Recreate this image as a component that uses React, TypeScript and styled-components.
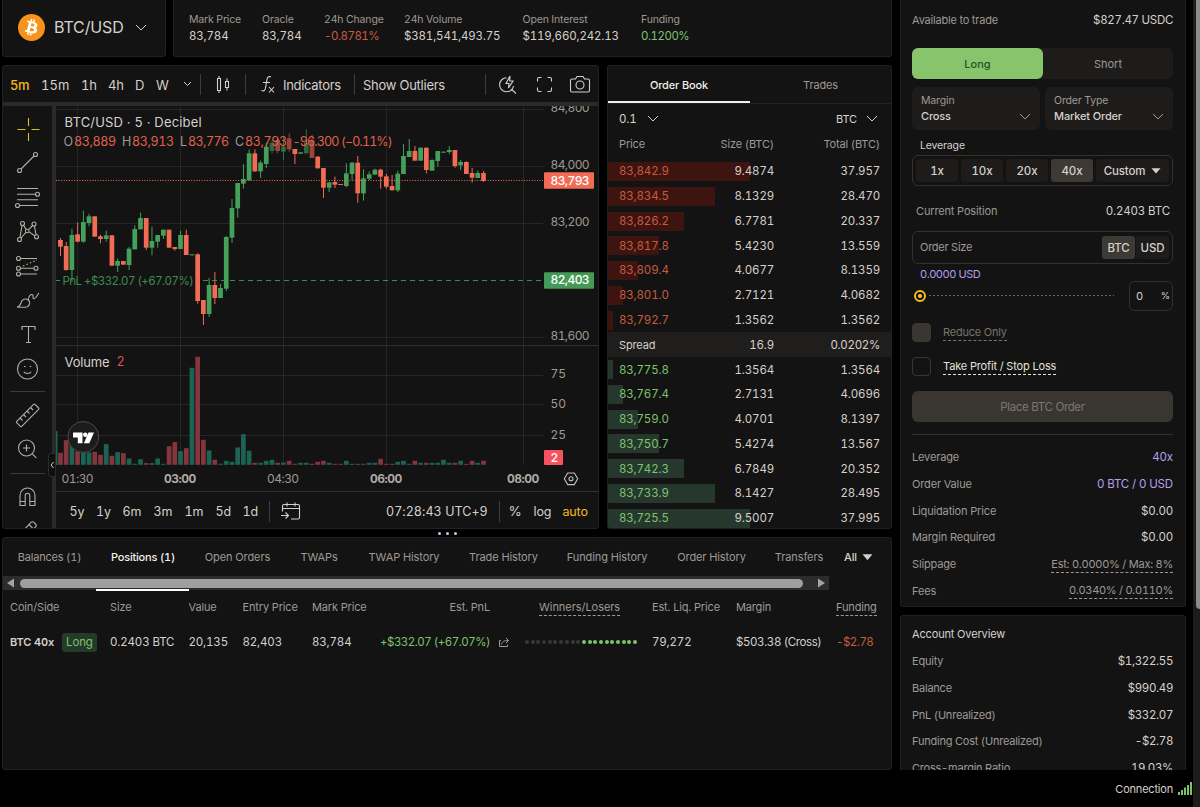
import React from "react";
import styled, { createGlobalStyle } from "styled-components";

const c = {
  panel: "#131313",
  edge: "#212121",
  strip: "#2a2a2a",
  text: "#d6d0cb",
  label: "#9f9994",
  bright: "#f2eeea",
  red: "#ca5a3f",
  green: "#7cc46a",
  purple: "#b79df0",
  gold: "#f6b81c",
  candleUp: "#45a05a",
  candleDown: "#f26b54",
};

const Global = createGlobalStyle`
  html, body { margin: 0; background: #000; }
  body {
    overflow: hidden;
    font-family: Inter, "Liberation Sans", sans-serif;
    font-size: 11px;
    font-variant-numeric: tabular-nums;
    letter-spacing: -0.15px;
    color: ${c.text};
  }
  *, *::before, *::after { box-sizing: border-box; }
  svg { display: block; flex: none; }
`;

const Page = styled.div`
  width: 1200px;
  height: 807px;
  display: grid;
  grid-template-columns: 1193px 7px;
  white-space: nowrap;
  overflow: hidden;
`;
const Content = styled.div`
  display: grid;
  grid-template-rows: 770px 37px;
`;
const Main = styled.div`
  display: grid;
  grid-template-columns: 890px 286px;
  column-gap: 8px;
  padding-left: 2px;
  height: 770px;
  overflow: hidden;
`;
const LeftColumn = styled.div`
  display: grid;
  grid-template-rows: 57px 464px 233px;
  row-gap: 8px;
  height: 770px;
`;
const Panel = styled.section`
  background: ${c.panel};
  border: 1px solid ${c.edge};
  border-radius: 3px;
  overflow: hidden;
  min-width: 0;
`;
const Columns = styled.div<{ $cols: string; $h?: number; $pad?: string; $size?: number }>`
  display: grid;
  grid-template-columns: ${(p) => p.$cols};
  align-items: center;
  height: ${(p) => (p.$h ? `${p.$h}px` : "auto")};
  padding: ${(p) => p.$pad ?? "0"};
  font-size: ${(p) => p.$size ?? 11}px;
`;
const Text = styled.span<{ $tone?: string; $size?: number; $weight?: number; $ls?: number; $end?: boolean; $mid?: boolean }>`
  color: ${(p) => p.$tone ?? c.text};
  font-size: ${(p) => (p.$size ? `${p.$size}px` : "inherit")};
  font-weight: ${(p) => p.$weight ?? 400};
  letter-spacing: ${(p) => (p.$ls === undefined ? "inherit" : `${p.$ls}px`)};
  text-align: ${(p) => (p.$end ? "right" : p.$mid ? "center" : "left")};
`;
const Dashed = styled(Text)<{ $under?: string }>`
  justify-self: start;
  line-height: 15px;
  padding-top: 1px;
  border-bottom: 1px dashed ${(p) => p.$under ?? p.$tone ?? c.text};
`;

/* ---------- header ---------- */
const HeaderRow = styled.div`
  display: grid;
  grid-template-columns: 164px 719px;
  column-gap: 7px;
`;
const TopPanel = styled(Panel)`
  border-top: 0;
  border-radius: 0 0 3px 3px;
`;
const Symbol = styled.div`
  display: flex;
  align-items: center;
  height: 54px;
  padding-left: 15px;
  gap: 9px;
`;
const PairChevron = styled.span`
  padding: 1px 0 0 2px;
`;
const Stat = styled.div`
  display: flex;
  flex-direction: column;
  gap: 2px;
  line-height: 14px;
`;

const stats: [string, string, string?][] = [
  ["Mark Price", "83,784"],
  ["Oracle", "83,784"],
  ["24h Change", "-0.8781%", c.red],
  ["24h Volume", "$381,541,493.75"],
  ["Open Interest", "$119,660,242.13"],
  ["Funding", "0.1200%", c.green],
];

const Chevron = ({ w = 12, color = c.text }: { w?: number; color?: string }) => (
  <svg width={w} height={w / 2 + 2} viewBox={`0 0 ${w} ${w / 2 + 2}`} fill="none" stroke={color}>
    <path d={`M1 1L${w / 2} ${w / 2}L${w - 1} 1`} />
  </svg>
);
const Caret = ({ w = 10 }: { w?: number }) => (
  <svg width={w} height={w * 0.6} viewBox="0 0 10 6" fill={c.text}>
    <path d="M0.5 0.3h9L5 5.6z" />
  </svg>
);

const Bitcoin = () => (
  <svg width="27" height="27" viewBox="0 0 64 64">
    <circle cx="32" cy="32" r="32" fill="#f7931a" />
    <path
      fill="#fff"
      d="M46.1 27.4c.6-4.3-2.6-6.5-7-8.1l1.4-5.7-3.5-.9-1.4 5.6-2.8-.7 1.4-5.6-3.4-.8-1.5 5.7-2.2-.5-4.8-1.2-.9 3.700s2.600.6 2.500.6c1.400.4 1.700 1.300 1.600 2l-3.900 15.800c-.2.4-.6 1.100-1.600.8l-2.500-.6-1.800 4 4.500 1.100 2.500.7-1.400 5.700 3.400.9 1.500-5.700 2.700.7-1.400 5.700 3.500.8 1.400-5.700c5.900 1.100 10.400.7 12.200-4.700 1.500-4.300-.1-6.800-3.200-8.400 2.300-.5 4-2 4.500-5.200zm-8 11.200c-1.100 4.300-8.300 2-10.600 1.400l1.900-7.600c2.300.6 9.800 1.700 8.700 6.200zm1.100-11.300c-1 3.900-7 1.900-8.900 1.400l1.700-6.900c1.900.5 8.200 1.400 7.200 5.500z"
    />
  </svg>
);

/* ---------- chart ---------- */
const MidRow = styled.div`
  display: grid;
  grid-template-columns: 597px 285px;
  column-gap: 8px;
`;
const ChartPanel = styled(Panel)`
  display: grid;
  grid-template-rows: 36px 426px;
`;
const ChartBody = styled.div`
  display: grid;
  grid-template-columns: 49px 546px;
  border-top: 4px solid ${c.strip};
`;
const Tools = styled.div`
  display: flex;
  flex-direction: column;
  align-items: center;
  height: 422px;
  overflow: hidden;
  padding-top: 9px;
  color: #b5afaa;
`;
const Tool = styled.div<{ $h: number }>`
  height: ${(p) => p.$h}px;
  flex: none;
  display: flex;
  align-items: center;
`;
const ToolRule = styled.div<{ $after: number }>`
  width: 35px;
  height: 1px;
  flex: none;
  background: #3a3a3a;
  margin-bottom: ${(p) => p.$after}px;
`;
const Canvas = styled.div`
  position: relative;
  border-left: 4px solid ${c.strip};
  display: grid;
  grid-template-rows: 386px 36px;
`;
const Rule = styled.div`
  width: 1px;
  height: 21px;
  background: #3d3d3d;
`;
const Collapse = styled.div`
  position: absolute;
  left: -8px;
  top: 347px;
  width: 8px;
  height: 24px;
  border-radius: 3px 0 0 3px;
  background: #0f0f0f;
  border: 1px solid #2c2c2c;
  display: flex;
  align-items: center;
  justify-content: center;
`;
const Handle = styled.div`
  position: absolute;
  left: 438px;
  top: 532px;
  display: flex;
  gap: 5px;
  i { width: 3px; height: 3px; border-radius: 2px; background: #c9c3ef; }
`;

// [direction, body top, body bottom, wick top, wick bottom, volume height], in thirds of a pixel
type Candle = [number, number, number, number, number, number];
const candles: Candle[] = [
  [0, 420, 440, 414, 468, 36], [0, 438, 510, 426, 512, 74], [1, 405, 510, 386, 545, 64], [0, 403, 425, 367, 427, 40],
  [1, 366, 425, 332, 428, 56], [1, 349, 369, 341, 379, 37], [0, 349, 410, 349, 410, 39], [0, 409, 417, 404, 430, 30],
  [1, 406, 417, 392, 425, 62], [0, 406, 497, 406, 497, 27], [1, 483, 497, 475, 516, 38], [0, 483, 494, 483, 494, 35],
  [1, 446, 495, 441, 510, 19], [1, 387, 448, 376, 448, 3], [1, 354, 388, 338, 388, 17], [0, 354, 443, 354, 450, 5],
  [1, 423, 443, 380, 466, 5], [1, 405, 425, 405, 443, 19], [1, 389, 407, 389, 417, 3], [0, 389, 443, 389, 443, 56],
  [0, 441, 447, 441, 452, 68], [1, 405, 447, 392, 447, 41], [0, 405, 465, 389, 465, 50], [1, 463, 466, 463, 466, 291],
  [0, 463, 603, 460, 611, 324], [0, 600, 642, 600, 675, 75], [1, 555, 642, 534, 651, 43], [0, 555, 594, 516, 612, 15],
  [1, 564, 594, 552, 594, 3], [1, 411, 566, 408, 573, 12], [1, 324, 413, 297, 429, 9], [1, 249, 325, 249, 353, 52],
  [1, 237, 251, 192, 266, 92], [1, 160, 241, 148, 241, 42], [0, 160, 214, 148, 216, 6], [1, 188, 214, 182, 234, 6],
  [1, 140, 192, 128, 204, 12], [1, 128, 153, 120, 160, 15], [0, 120, 153, 112, 160, 6], [1, 140, 155, 112, 180, 7],
  [0, 115, 148, 100, 155, 12], [0, 147, 162, 147, 192, 3], [1, 157, 161, 157, 161, 6], [1, 128, 160, 88, 160, 6],
  [0, 120, 174, 105, 174, 3], [0, 170, 205, 168, 205, 9], [0, 204, 263, 204, 294, 12], [1, 247, 263, 247, 276, 6],
  [0, 246, 254, 230, 264, 3], [0, 252, 255, 252, 255, 3], [1, 220, 258, 190, 262, 12], [1, 188, 222, 186, 240, 3],
  [0, 188, 280, 168, 308, 3], [1, 235, 280, 208, 302, 3], [1, 223, 236, 214, 240, 6], [1, 209, 224, 206, 224, 6],
  [0, 209, 230, 206, 266, 18], [0, 229, 260, 222, 266, 3], [0, 258, 271, 225, 271, 3], [1, 221, 271, 212, 276, 9],
  [1, 168, 222, 132, 222, 12], [1, 153, 171, 117, 171, 3], [0, 153, 182, 138, 182, 12], [1, 143, 182, 143, 182, 6],
  [0, 143, 210, 143, 220, 6], [1, 180, 212, 178, 212, 6], [1, 153, 183, 153, 200, 6], [1, 155, 158, 155, 158, 15],
  [1, 150, 156, 138, 162, 6], [0, 150, 198, 150, 203, 6], [1, 186, 196, 180, 210, 12], [0, 186, 222, 184, 222, 3],
  [0, 219, 233, 204, 248, 12], [1, 219, 234, 212, 234, 6], [0, 219, 243, 213, 246, 12],
];
const vLines = [77.5, 180.5, 283.5, 386.5, 523.5];
const priceLines = [109.5, 166.5, 223.5, 337.5];
const volLines = [375.5, 404.5, 435.5];

const Plot = () => (
  <svg width="542" height="386" viewBox="56 106 542 386" fontFamily="Inter, sans-serif" fontSize="12">
    <g stroke="#262626">
      {vLines.map((x) => <path key={x} d={`M${x} 106V465`} />)}
      {priceLines.map((y) => <path key={y} d={`M56 ${y}H543`} />)}
      {volLines.map((y) => <path key={y} d={`M56 ${y}H543`} />)}
      <path d="M56 345.5H598M56 491.5H598" stroke="#303030" />
    </g>
    <rect x="56" y="431" width="1.5" height="34" fill="#1d6455" />
    {candles.map(([up, , , , , vol], i) => (
      <rect key={i} x={58.1 + i * 5.717} y={464.8 - vol / 3} width="4.7" height={vol / 3} fill={up ? "#1d6354" : "#84353d"} />
    ))}
    {candles.map(([up, top, bottom, high, low], i) => {
      const fill = up ? c.candleUp : c.candleDown;
      const x = 58.1 + i * 5.717;
      return (
        <g key={i} fill={fill} opacity={i > 36 && i < 45 && top < 147 ? 0.6 : 1}>
          <rect x={x + 1.9} y={100 + high / 3} width="1" height={(low - high) / 3} />
          <rect x={x} y={100 + top / 3} width="4.7" height={(bottom - top) / 3} />
        </g>
      );
    })}
    <path d="M56 180.5H543" stroke={c.candleDown} strokeDasharray="1 1.6" />
    <path d="M56 280.5H60M203 280.5H543" stroke={c.candleUp} strokeOpacity="0.85" strokeDasharray="5 4" />
    <text x="62.5" y="284.7" fontSize="11.5" fill="#3d8a4e" textLength="131">PnL +$332.07 (+67.07%)</text>

    <text x="64.5" y="126.8" fontSize="13" fill={c.text} textLength="137">BTC/USD · 5 · Decibel</text>
    <g fill="#e0604b" fontSize="12.5">
      <text x="63.5" y="145.8" fill={c.label}>O</text><text x="74" y="145.8" textLength="42">83,889</text>
      <text x="122" y="145.8" fill={c.label}>H</text><text x="132" y="145.8" textLength="42">83,913</text>
      <text x="180" y="145.8" fill={c.label}>L</text><text x="188" y="145.8" textLength="41">83,776</text>
      <text x="235" y="145.8" fill={c.label}>C</text><text x="245" y="145.8" textLength="42">83,793</text>
      <text x="292.5" y="145.8" textLength="100">-96.300 (−0.11%)</text>
    </g>
    <text x="64.5" y="366.8" fontSize="13" fill={c.text} textLength="45">Volume</text>
    <text x="116.500" y="366.3" fontSize="12.5" fill="#e34c5c">2</text>

    <g fill={c.label} fontSize="12">
      <text x="550.5" y="112" textLength="39">84,800</text>
      <text x="550.5" y="169" textLength="39">84,000</text>
      <text x="550.5" y="226" textLength="39">83,200</text>
      <text x="550.5" y="340" textLength="39">81,600</text>
      <text x="550.5" y="378.3">75</text>
      <text x="550.5" y="408">50</text>
      <text x="550.5" y="438.5">25</text>
      <text x="61.5" y="483.3" textLength="32">01:30</text>
      <text x="267" y="483.3" textLength="32">04:30</text>
    </g>
    <g fill="#b0aaa5" fontSize="12" fontWeight="700">
      <text x="164" y="483.3" textLength="32">03:00</text>
      <text x="370" y="483.3" textLength="32">06:00</text>
      <text x="507" y="483.3" textLength="32">08:00</text>
    </g>
    <rect x="544" y="172.3" width="50" height="16.5" rx="1" fill="#f26b54" />
    <rect x="544" y="272.3" width="50" height="16.5" rx="1" fill="#459a58" />
    <rect x="544" y="450" width="19" height="15" rx="1" fill="#f7525f" />
    <g fill="#fff" fontSize="12" fontWeight="500">
      <text x="550.5" y="184.8" textLength="39">83,793</text>
      <text x="550.5" y="284.3" textLength="39">82,403</text>
      <text x="550.5" y="462">2</text>
    </g>
    <g fill="none" stroke="#c5bfba" strokeWidth="1.1">
      <path d="M564.3 478.8L567.7 473H574.3L577.7 478.8L574.3 484.6H567.7Z" />
      <circle cx="571" cy="478.8" r="2" />
    </g>
    <circle cx="83.3" cy="437" r="15.5" fill="#1c1c1c" stroke="#4a4a4a" />
    <g fill="#fff">
      <path d="M73 432.5h9.500v10.800h-4.700v-5.800H73zM88.500 432.500h5.500l-4.700 10.800h-5.400z" />
      <circle cx="85.3" cy="434.8" r="2.2" />
    </g>
  </svg>
);

const Icon = ({ children, size = 28, color = "currentColor" }: { children: React.ReactNode; size?: number; color?: string }) => (
  <svg width={size} height={size} viewBox={`0 0 ${size} ${size}`} fill="none" stroke={color} strokeWidth="1.1">{children}</svg>
);

const ToolStrip = () => (
  <Tools>
    <Tool $h={28}><Icon color="#d9c21e"><path d="M14.5 3v8M14.5 18v8M3.5 14.5h8M17.5 14.5h8" /></Icon></Tool>
    <Tool $h={38}><Icon><circle cx="5.5" cy="22.5" r="2" /><circle cx="21.5" cy="6.5" r="2" /><path d="M7 21L20 8" /></Icon></Tool>
    <Tool $h={32}><Icon><path d="M3 5.5h21M3 11.3h18.5M3 16.8h21M6 22.5h18" /><circle cx="23.5" cy="11.3" r="2" /><circle cx="3.5" cy="22.5" r="2" /></Icon></Tool>
    <Tool $h={36}><Icon><circle cx="8.5" cy="6.5" r="2" /><circle cx="20" cy="7" r="2" /><circle cx="13.2" cy="14" r="1.8" /><circle cx="5.5" cy="22.5" r="2" /><circle cx="22.5" cy="19.8" r="2" /><path d="M5.9 20.5L8.1 8.5M9.5 8.2l2.7 4.2M14.6 12.7l4-4.2M20.4 9l1.7 8.8M7 21l4.9-5.6M15 14.9l5.8 3.8" /></Icon></Tool>
    <Tool $h={34}><Icon><circle cx="4.5" cy="6.5" r="2" /><circle cx="4.5" cy="16.2" r="2" /><circle cx="22" cy="16.2" r="2" /><circle cx="4.5" cy="22" r="2" /><path d="M6.5 6.5H23M6.5 16.2H20M6.5 22H23" /><path d="M9 14L23 8" strokeDasharray="1.5 2.2" /></Icon></Tool>
    <Tool $h={34}><Icon><path d="M3 21c3-.4 3.400-2.200 4.200-4.700.8-2.800 4.300-4.300 7-2.300 2.500 2 1.700 5.500-.9 6.700-2.800 1-6.300.7-10.300.3zM14.500 13.800c-.5-3.500 2.500-6.300 4.300-4.800 1.200 1.500-1 3.200 1 3.700 2 .4 2.700-2.700 5.200-5.700" /></Icon></Tool>
    <Tool $h={34}><Icon><path d="M8 10V6.500h13V10M14.500 6.500v16M12 22.500h5" /></Icon></Tool>
    <Tool $h={36}><Icon><circle cx="13.500" cy="14" r="10" /><path d="M9.800 16.800c1.300 2.300 6.100 2.300 7.400 0M10 11.500h1.600M15.600 11.500h1.600" /></Icon></Tool>
    <Tool $h={4} />
    <ToolRule $after={9} />
    <Tool $h={28}><Icon><path d="M2.700 20.300L19.600 3.400a1 1 0 011.400 0l3.600 3.600a1 1 0 010 1.400L7.700 25.300a1 1 0 01-1.400 0l-3.600-3.600a1 1 0 010-1.400zM6 17l2.500 2.500M9.500 13.500l2.500 2.500M13 10l2.500 2.500M16.500 6.500L19 9" /></Icon></Tool>
    <Tool $h={40}><Icon><circle cx="12.500" cy="13" r="8" /><path d="M9 13h7M12.500 9.500v7M18.300 18.800l4 4" /></Icon></Tool>
    <Tool $h={4} />
    <ToolRule $after={8} />
    <Tool $h={30}><Icon><path d="M6.500 22.500V12.500a7.500 7.500 0 0115 0v10h-5.200V12.500a2.300 2.300 0 00-4.600 0v10zM6.500 18.500h5.200M16.300 18.500h5.200" transform="translate(-.5 0)" /></Icon></Tool>
    <Tool $h={34}><Icon><path d="M6 19L17 7.500a2 2 0 013 0l1.500 1.500a2 2 0 010 3L12 22M15 9.500l4.500 4.500" /></Icon></Tool>
  </Tools>
);

const TopToolbar = () => (
  <Columns $h={37} $pad="0 0 0 7px" $size={13} $cols="31px 40px 27px 27px 21px 27px 17px 16px 29px 16px 22px 71px 9px 122px 13px 36.500px 34px 24px">
    <Text $tone={c.gold} $weight={500} $ls={-0.3}>5m</Text>
    <Text $ls={0.1}>15m</Text>
    <Text>1h</Text>
    <Text>4h</Text>
    <Text>D</Text>
    <Text>W</Text>
    <Chevron w={9} />
    <Rule />
    <Icon size={20}><path d="M1.500 3.500h3v12h-3zM3 1v2.500M3 15.500V18M9.500 6.500h3v6h-3zM11 3.500v3M11 12.500v3" /></Icon>
    <Rule />
    <Icon size={20}><path d="M.5 15.500c2.500 1 3.500 0 4-2.500L6 4.500C6.400 2 7.500 1.200 10 1.800M2 7.500h7M8 12l5 5.500M13 12l-5 5.500" /></Icon>
    <Text $ls={-0.3}>Indicators</Text>
    <Rule />
    <Text $ls={-0.25}>Show Outliers</Text>
    <Rule />
    <Icon size={20}><path d="M8.500 2.800a7 7 0 107 8.200M13.700 14.500l4.300 4M12 1L8 8.500h3L10.500 13 15 6h-3.300z" /></Icon>
    <Icon size={20}><path d="M2.500 6.500V4a1.500 1.500 0 011.500-1.500h2.500M12.500 2.500H15A1.500 1.500 0 0116.500 4v2.500M16.500 12.500V15a1.500 1.500 0 01-1.500 1.500h-2.500M6.500 16.500H4A1.500 1.500 0 012.500 15v-2.500" /></Icon>
    <Icon size={22}><path d="M3 5h3.500L8 2.500h6L15.500 5H19a1.500 1.500 0 011.500 1.500v10A1.500 1.500 0 0119 18H3a1.500 1.500 0 01-1.500-1.500v-10A1.500 1.500 0 013 5z" /><circle cx="11" cy="11" r="4" /></Icon>
  </Columns>
);

const RangeBar = () => (
  <Columns $h={38} $pad="0 0 0 13.500px" $size={12.5} $cols="26.500px 26.500px 31px 31px 31px 27px 26px 12.500px 105px 113px 9.500px 25px 29px 30px">
    {["5y", "1y", "6m", "3m", "1m", "5d", "1d"].map((t) => <Text key={t}>{t}</Text>)}
    <Rule />
    <Icon size={20}><path d="M1.500 10.500V5A1.500 1.500 0 013 3.500h14A1.500 1.500 0 0118.500 5v11.500A1.500 1.500 0 0117 18h-7M1.500 7.500h17M6 1.500v4M14 1.500v4M0 14.500h7.500M4.500 11.500l3 3-3 3" /></Icon>
    <Text $ls={0.05}>07:28:43 UTC+9</Text>
    <Rule />
    <Text $size={13.5}>%</Text>
    <Text>log</Text>
    <Text $tone={c.gold}>auto</Text>
  </Columns>
);

/* ---------- order book ---------- */
const BookTabs = styled.div`
  display: grid;
  grid-template-columns: 142px 1fr;
  height: 38px;
  border-bottom: 1px solid ${c.edge};
`;
const BookTab = styled.div<{ $on?: boolean }>`
  display: flex;
  align-items: center;
  justify-content: center;
  padding-top: 2px;
  font-weight: ${(p) => (p.$on ? 500 : 400)};
  color: ${(p) => (p.$on ? c.bright : c.label)};
  border-bottom: 2px solid ${(p) => (p.$on ? c.bright : "transparent")};
`;
const Between = styled.div<{ $h: number; $pad?: string }>`
  display: flex;
  align-items: center;
  justify-content: space-between;
  height: ${(p) => p.$h}px;
  padding: ${(p) => p.$pad ?? "0"};
`;
const Inline = styled.div<{ $gap: number }>`
  display: flex;
  align-items: center;
  gap: ${(p) => p.$gap}px;
`;
const BookHead = styled(Columns)`
  margin-bottom: 4px;
`;
const BookRow = styled.div<{ $fill?: number; $side?: "ask" | "bid" | "mid" }>`
  display: grid;
  grid-template-columns: 76px 79px 106px;
  align-items: center;
  height: 24.78px;
  padding-left: 11px;
  font-size: 11.5px;
  background: ${(p) =>
    p.$side === "mid"
      ? "#1f1e1d"
      : `linear-gradient(${p.$side === "ask" ? "#3d140f" : "#26382e"}, ${p.$side === "ask" ? "#3d140f" : "#26382e"}) 0 3px / ${p.$fill}px 19px no-repeat`};
`;
const fills = [142, 107, 76, 51, 30, 15, 5];
const asks = [
  ["83,842.9", "9.4874", "37.957"], ["83,834.5", "8.1329", "28.470"], ["83,826.2", "6.7781", "20.337"], ["83,817.8", "5.4230", "13.559"],
  ["83,809.4", "4.0677", "8.1359"], ["83,801.0", "2.7121", "4.0682"], ["83,792.7", "1.3562", "1.3562"],
];
const bids = [
  ["83,775.8", "1.3564", "1.3564"], ["83,767.4", "2.7131", "4.0696"], ["83,759.0", "4.0701", "8.1397"], ["83,750.7", "5.4274", "13.567"],
  ["83,742.3", "6.7849", "20.352"], ["83,733.9", "8.1427", "28.495"], ["83,725.5", "9.5007", "37.995"],
];

const OrderBook = () => (
  <Panel>
    <BookTabs><BookTab $on>Order Book</BookTab><BookTab>Trades</BookTab></BookTabs>
    <Between $h={30} $pad="0 13px 0 11px">
      <Inline $gap={10}><Text $size={11.5}>0.1</Text><Chevron /></Inline>
      <Inline $gap={9}><Text>BTC</Text><Chevron /></Inline>
    </Between>
    <BookHead $h={21} $pad="0 0 2px 11px" $cols="76px 79px 106px">
      <Text $tone={c.label}>Price</Text><Text $tone={c.label} $end>Size (BTC)</Text><Text $tone={c.label} $end>Total (BTC)</Text>
    </BookHead>
    {asks.map(([p, s, t], i) => (
      <BookRow key={p} $side="ask" $fill={fills[i]}><Text $tone={c.red}>{p}</Text><Text $end>{s}</Text><Text $end>{t}</Text></BookRow>
    ))}
    <BookRow $side="mid"><Text $size={11}>Spread</Text><Text $end>16.9</Text><Text $end $ls={-0.3}>0.0202%</Text></BookRow>
    {bids.map(([p, s, t], i) => (
      <BookRow key={p} $side="bid" $fill={fills[6 - i]}><Text $tone={c.green}>{p}</Text><Text $end>{s}</Text><Text $end>{t}</Text></BookRow>
    ))}
  </Panel>
);

/* ---------- positions ---------- */
const TabScroller = styled.div`
  height: 14px;
  width: 826px;
  background: #2c2c2c;
  display: grid;
  grid-template-columns: 17px 783px 26px;
  align-items: center;
`;
const Thumb = styled.div`
  height: 9px;
  border-radius: 5px;
  background: #9f9f9f;
`;
const Underline = styled.div`
  width: 93px;
  height: 2px;
  margin: -1px 0 0 93px;
  background: #fff;
  position: relative;
`;
const LongTag = styled.span`
  background: #243b2c;
  color: ${c.green};
  border-radius: 3px;
  padding: 0 4px;
  line-height: 19px;
`;
const Dots = styled.div`
  display: flex;
  gap: 1.7px;
`;
const Dot = styled.i<{ $on: boolean }>`
  width: 4px;
  height: 4px;
  border-radius: 50%;
  background: ${(p) => (p.$on ? c.green : "#3b3735")};
`;
const AllFilter = styled(Inline)`
  padding-left: 7px;
`;
const WinnersHead = styled(Dashed)`
  margin-left: 14px;
`;
const tableCols = "100px 78.500px 54px 69.500px 178px 35px 127px 84px 100px 50px";

const Positions = () => (
  <Panel>
    <Columns $h={38} $cols="93px 94px 95px 68px 102px 97px 110px 99px 76px 40px">
      {["Balances (1)", "Positions (1)", "Open Orders", "TWAPs", "TWAP History", "Trade History", "Funding History", "Order History", "Transfers"].map((t, i) => (
        <Text key={t} $mid $ls={i < 2 ? -0.2 : -0.1} $tone={i === 1 ? c.bright : c.label} $weight={i === 1 ? 500 : 400}>{t}</Text>
      ))}
      <AllFilter $gap={5}><Text $weight={500}>All</Text><Caret w={11} /></AllFilter>
    </Columns>
    <TabScroller>
      <svg width="17" height="10" viewBox="0 0 17 10" fill="#a3a3a3"><path d="M4 5l7-4.500v9z" /></svg>
      <Thumb />
      <svg width="26" height="10" viewBox="0 0 26 10" fill="#a3a3a3"><path d="M22 5l-7-4.500v9z" /></svg>
    </TabScroller>
    <Underline />
    <Columns $h={32} $pad="0 0 0 7px" $cols={tableCols}>
      {["Coin/Side", "Size", "Value", "Entry Price"].map((t) => <Text key={t} $tone={c.label}>{t}</Text>)}
      <Between $h={16}><Text $tone={c.label}>Mark Price</Text><Text $tone={c.label}>Est. PnL</Text></Between>
      <span />
      <WinnersHead $tone={c.label} $ls={-0.05}>Winners/Losers</WinnersHead>
      <Text $tone={c.label}>Est. Liq. Price</Text>
      <Text $tone={c.label}>Margin</Text>
      <Dashed $tone={c.label}>Funding</Dashed>
    </Columns>
    <Columns $h={38} $pad="0 0 0 7px" $size={11.5} $cols={tableCols}>
      <Inline $gap={8}><Text $size={11} $weight={600}>BTC 40x</Text><LongTag>Long</LongTag></Inline>
      <Text>0.2403 BTC</Text>
      <Text>20,135</Text>
      <Text>82,403</Text>
      <Between $h={16}><Text>83,784</Text><Text $tone={c.green} $ls={-0.5}>+$332.07 (+67.07%)</Text></Between>
      <svg width="28" height="11" viewBox="0 0 28 11" fill="none" stroke={c.label}><path d="M11 3.500H9.500v6h8V7.500M11.500 7.500C12 4.500 14 3.500 18.500 3.500M16 1l2.500 2.500L16 6" /></svg>
      <Dots>{Array.from({ length: 20 }, (_, i) => <Dot key={i} $on={i > 9} />)}</Dots>
      <Text>79,272</Text>
      <Text $ls={-0.4}>$503.38 (Cross)</Text>
      <Text $tone={c.red} $ls={-0.5}>-$2.78</Text>
    </Columns>
  </Panel>
);

/* ---------- order form ---------- */
const Side = styled.aside`
  display: grid;
  grid-template-rows: 607px 200px;
  row-gap: 8px;
  height: 770px;
  overflow: hidden;
`;
const Form = styled(TopPanel)`
  padding: 0 12px 0 11px;
  display: flex;
  flex-direction: column;
`;
const Segmented = styled.div`
  display: grid;
  grid-template-columns: 131px 130px;
  height: 31px;
  margin-bottom: 8px;
  border-radius: 6px;
  background: #1d1c1b;
`;
const SegmentButton = styled.button<{ $on?: boolean }>`
  border: 0;
  border-radius: 6px;
  background: ${(p) => (p.$on ? "#87c46b" : "transparent")};
  color: ${(p) => (p.$on ? "#2c4f24" : c.label)};
  font: ${(p) => (p.$on ? 500 : 400)} 11px Inter, sans-serif;
`;
const Selects = styled.div`
  display: grid;
  grid-template-columns: 128px 128px;
  justify-content: space-between;
`;
const SelectBox = styled.div`
  height: 43px;
  padding: 6px 9px 0;
  background: #1d1c1b;
  border-radius: 6px;
  line-height: 15.500px;
`;
const LeverageBox = styled.div`
  display: grid;
  grid-template-columns: repeat(4, 42px) 73px;
  gap: 3px;
  height: 31px;
  padding: 3px;
  border: 1px solid #33302d;
  border-radius: 6px;
`;
const Chip = styled.div<{ $on?: boolean }>`
  display: flex;
  align-items: center;
  justify-content: center;
  gap: 6px;
  border-radius: 3px;
  font-size: 11.500px;
  font-weight: 500;
  background: ${(p) => (p.$on ? "#3d3934" : "#1d1c1b")};
`;
const Field = styled.div<{ $w?: number; $h: number; $pad: string }>`
  display: flex;
  align-items: center;
  justify-content: space-between;
  width: ${(p) => (p.$w ? `${p.$w}px` : "auto")};
  height: ${(p) => p.$h}px;
  padding: ${(p) => p.$pad};
  border: 1px solid #33302d;
  border-radius: 6px;
`;
const FieldLabel = styled(Text)`
  padding-bottom: 2px;
`;
const UnitPair = styled.div`
  display: grid;
  grid-template-columns: 33px 33px;
  gap: 1px;
  height: 23px;
`;
const SliderRow = styled.div`
  display: flex;
  align-items: center;
  height: 31px;
`;
const Knob = styled.div`
  width: 12px;
  height: 12px;
  margin-left: 2px;
  border-radius: 50%;
  border: 2px solid ${c.gold};
  background: radial-gradient(circle, ${c.gold} 0 1.800px, #131313 2.300px);
`;
const Track = styled.div`
  width: 185px;
  height: 1px;
  margin: 0 15px 0 3px;
  background: repeating-linear-gradient(90deg, #6a645f 0 2px, transparent 2px 4px);
`;
const Check = styled.div<{ $filled?: boolean }>`
  width: 19px;
  height: 19px;
  border-radius: 4px;
  border: 1px solid #3a3733;
  background: ${(p) => (p.$filled ? "#3a3632" : "transparent")};
`;
const Submit = styled.button`
  height: 31px;
  flex: none;
  margin-top: 11px;
  border: 0;
  border-radius: 6px;
  background: #393530;
  color: #7d7670;
  font: 400 11.500px Inter, sans-serif;
  letter-spacing: -0.35px;
`;
const Divider = styled.div`
  height: 1px;
  margin: 12px 0 9px;
  background: #33302e;
`;
const Overview = styled(Panel)`
  padding: 5px 12px 0 11px;
`;
const ScrollTrack = styled.div`
  background: #1c1c1c;
  padding-left: 3px;
`;
const ScrollThumb = styled.div`
  height: 609px;
  background: #8b8b8b;
  border-bottom-left-radius: 5px;
`;

const summary: [string, string, string?][] = [
  ["Leverage", "40x", c.purple],
  ["Order Value", "0 BTC / 0 USD", c.purple],
  ["Liquidation Price", "$0.00"],
  ["Margin Required", "$0.00"],
];
const account = [
  ["Equity", "$1,322.55"],
  ["Balance", "$990.49"],
  ["PnL (Unrealized)", "$332.07"],
  ["Funding Cost (Unrealized)", "-$2.78"],
  ["Cross-margin Ratio", "19.03%"],
];

const OrderForm = () => (
  <Form>
    <Between $h={48} $pad="0 0 8px"><Text $tone={c.label} $ls={-0.2}>Available to trade</Text><Text $size={11.5} $ls={-0.3}>$827.47 USDC</Text></Between>
    <Segmented><SegmentButton $on>Long</SegmentButton><SegmentButton>Short</SegmentButton></Segmented>
    <Selects>
      {[["Margin", "Cross"], ["Order Type", "Market Order"]].map(([l, v]) => (
        <SelectBox key={l}>
          <Text $tone={c.label} $size={10.5}>{l}</Text>
          <Between $h={16}><Text $weight={500}>{v}</Text><Chevron color={c.label} /></Between>
        </SelectBox>
      ))}
    </Selects>
    <Between $h={25} $pad="5px 8px 0"><Text $size={10.5}>Leverage</Text></Between>
    <LeverageBox>
      <Chip>1x</Chip><Chip>10x</Chip><Chip>20x</Chip><Chip $on>40x</Chip><Chip>Custom <Caret w={10} /></Chip>
    </LeverageBox>
    <Between $h={45} $pad="4px 3px 0 4px"><Text $tone={c.label}>Current Position</Text><Text $size={11.5}>0.2403 BTC</Text></Between>
    <Field $h={33} $pad="0 3px 0 7px">
      <FieldLabel $tone={c.label} $ls={-0.25}>Order Size</FieldLabel>
      <UnitPair><Chip $on>BTC</Chip><Chip>USD</Chip></UnitPair>
    </Field>
    <Between $h={16} $pad="3px 8px 0"><Text $tone={c.purple} $ls={-0.45}>0.0000 USD</Text></Between>
    <SliderRow><Knob /><Track /><Field $w={44} $h={30} $pad="0 2px 0 6px"><Text>0</Text><Text $size={9.5}>%</Text></Field></SliderRow>
    <Columns $h={42} $cols="31px 1fr"><Check $filled /><Dashed $tone="#7a746f" $ls={-0.2}>Reduce Only</Dashed></Columns>
    <Columns $h={27} $cols="31px 1fr"><Check /><Dashed $tone="#e5e0db">Take Profit / Stop Loss</Dashed></Columns>
    <Submit>Place BTC Order</Submit>
    <Divider />
    {summary.map(([l, v, tone]) => (
      <Between key={l} $h={26.7}><Text $tone={c.label}>{l}</Text><Text $tone={tone} $size={11.5}>{v}</Text></Between>
    ))}
    <Between $h={26.7}><Text $tone={c.label}>Slippage</Text><Dashed $tone={c.label} $size={11} $ls={-0.25}>Est: 0.0000% / Max: 8%</Dashed></Between>
    <Between $h={26.7}><Text $tone={c.label}>Fees</Text><Dashed $tone={c.label} $size={11} $ls={-0.27}>0.0340% / 0.0110%</Dashed></Between>
  </Form>
);

/* ---------- footer ---------- */
const Footer = styled.footer`
  display: flex;
  align-items: center;
  justify-content: flex-end;
  gap: 5px;
  padding: 0 1px 0 0;
`;

export default function App() {
  return (
    <>
      <Global />
      <Page>
        <Content>
          <Main>
            <LeftColumn>
              <HeaderRow>
                <TopPanel><Symbol><Bitcoin /><Text $size={16}>BTC/USD</Text><PairChevron><Chevron w={12} /></PairChevron></Symbol></TopPanel>
                <TopPanel>
                  <Columns $h={55} $pad="0 0 0 15px" $cols="73px 62px 80px 118.500px 118.500px 90px">
                    {stats.map(([l, v, tone]) => (
                      <Stat key={l}>
                        <Text $tone={c.label} $size={10.5}>{l}</Text>
                        <Text $tone={tone} $size={11.5} $ls={tone ? -0.5 : undefined}>{v}</Text>
                      </Stat>
                    ))}
                  </Columns>
                </TopPanel>
              </HeaderRow>
              <MidRow>
                <ChartPanel>
                  <TopToolbar />
                  <ChartBody>
                    <ToolStrip />
                    <Canvas>
                      <Plot />
                      <RangeBar />
                      <Collapse><svg width="4" height="8" viewBox="0 0 4 8" fill="none" stroke={c.text}><path d="M3.500 1L1 4l2.500 3" /></svg></Collapse>
                    </Canvas>
                  </ChartBody>
                </ChartPanel>
                <OrderBook />
              </MidRow>
              <Positions />
            </LeftColumn>
            <Side>
              <OrderForm />
              <Overview>
                <Between $h={27} $pad="0 0 1px"><Text>Account Overview</Text></Between>
                {account.map(([l, v]) => (
                  <Between key={l} $h={26.7}><Text $tone={c.label} $ls={-0.22}>{l}</Text><Text $size={11.5} $ls={-0.35}>{v}</Text></Between>
                ))}
              </Overview>
            </Side>
          </Main>
          <Footer>
            <Text $ls={-0.2}>Connection</Text>
            <svg width="14" height="13" viewBox="0 0 14 13" fill={c.green}><path d="M0 10h2v3H0zM3 8h2v5H3zM6 5.500h2V13H6zM9 3h2v10H9zM12 0h2v13h-2z" /></svg>
          </Footer>
        </Content>
        <ScrollTrack><ScrollThumb /></ScrollTrack>
        <Handle><i /><i /><i /></Handle>
      </Page>
    </>
  );
}
